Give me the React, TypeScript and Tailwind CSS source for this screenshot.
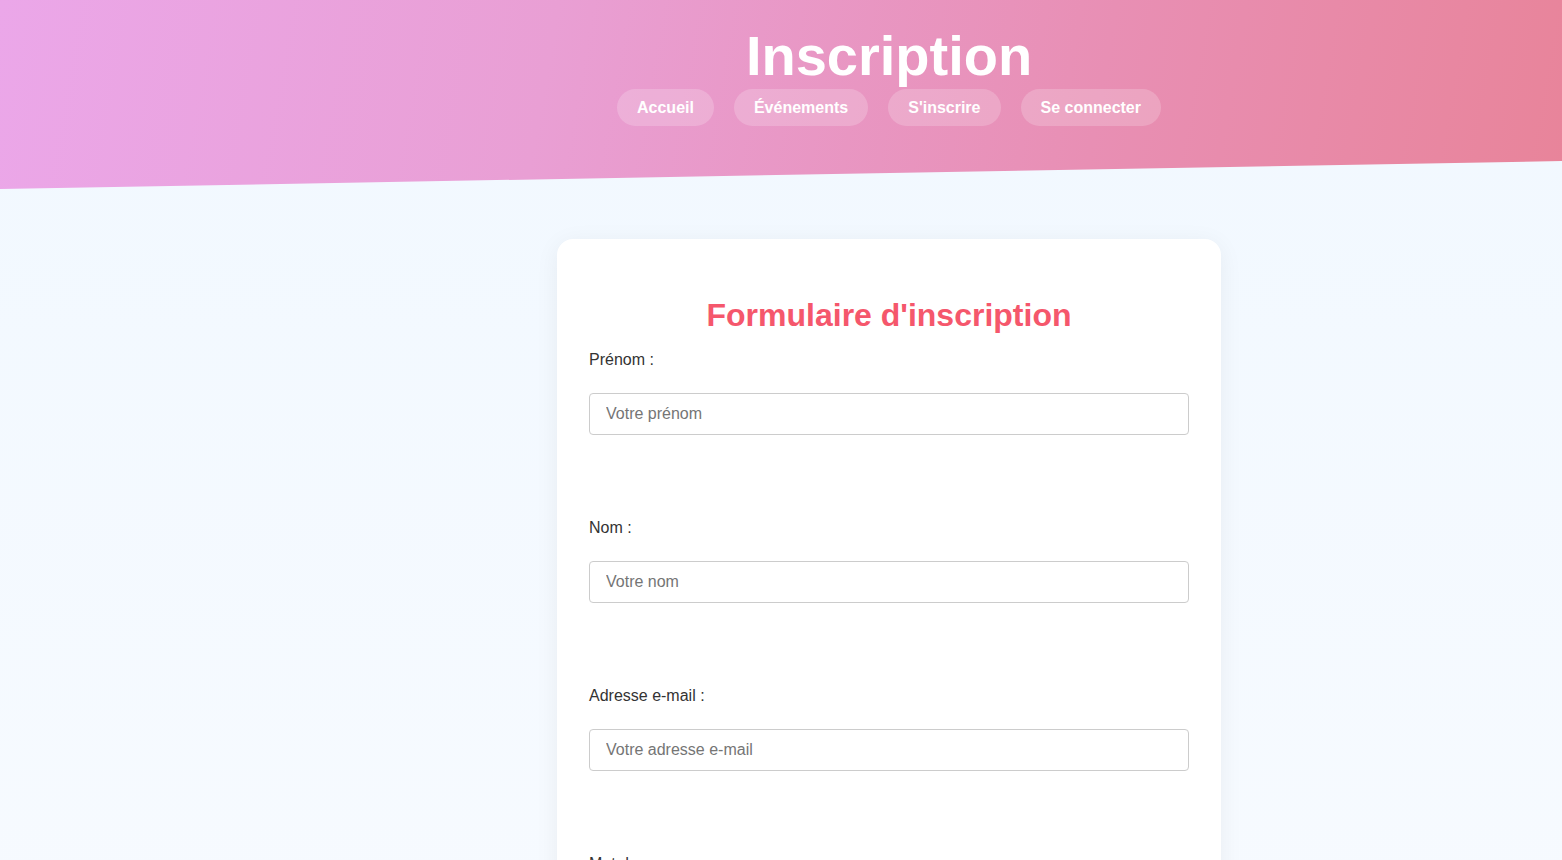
import React from 'react';

const navLinks = ['Accueil', 'Événements', "S'inscrire", 'Se connecter'];

const fields = [
  { label: 'Prénom :', placeholder: 'Votre prénom', type: 'text' },
  { label: 'Nom :', placeholder: 'Votre nom', type: 'text' },
  { label: 'Adresse e-mail :', placeholder: 'Votre adresse e-mail', type: 'email' },
  { label: 'Mot de passe :', placeholder: 'Votre mot de passe', type: 'password' },
];

export default function App() {
  return (
    <div className="min-h-screen bg-[linear-gradient(180deg,#f1f8ff_0%,#f8fbff_100%)] font-['Liberation_Sans',Arial,sans-serif] text-[#333]">
      {/* Header */}
      <header className="h-[189px] bg-[linear-gradient(100deg,#eba7e9_0%,#e99fd4_35%,#e88fb4_70%,#e8849a_100%)] [clip-path:polygon(0_0,100%_0,100%_85.2%,0_100%)]">
        <div className="pl-[216px] pt-[24px] flex flex-col items-center">
          <h1 className="text-[56px] leading-[64px] font-bold text-white">Inscription</h1>
          <nav className="flex gap-5 mt-[1px]">
            {navLinks.map((l) => (
              <a
                key={l}
                href="#"
                className="h-[37px] px-5 flex items-center rounded-full bg-white/20 text-white font-bold text-base"
              >
                {l}
              </a>
            ))}
          </nav>
        </div>
      </header>

      {/* Form card */}
      <main className="pl-[216px] pt-[50px] pb-16 flex justify-center">
        <div className="w-[664px] bg-white rounded-2xl shadow-[0_4px_24px_rgba(0,0,0,0.06)] px-8 pt-[58px] pb-10">
          <h2 className="text-center text-[32px] leading-[37px] font-bold text-[#f5576c] mb-[17px]">
            Formulaire d'inscription
          </h2>
          <form className="flex flex-col">
            {fields.map((f, i) => (
              <div key={f.label} className={i === 0 ? '' : 'mt-[84px]'}>
                <label className="block text-base leading-[18px] text-[#333]">{f.label}</label>
                <input
                  type={f.type}
                  placeholder={f.placeholder}
                  className="mt-[24px] w-full h-[42px] px-4 border border-[#ccc] rounded text-base text-[#333] placeholder:text-[#757575] outline-none"
                />
              </div>
            ))}
            <button
              type="button"
              className="mt-16 h-[44px] rounded-full bg-[linear-gradient(100deg,#f093fb,#f5576c)] text-white font-bold text-base"
            >
              S'inscrire
            </button>
          </form>
        </div>
      </main>
    </div>
  );
}
